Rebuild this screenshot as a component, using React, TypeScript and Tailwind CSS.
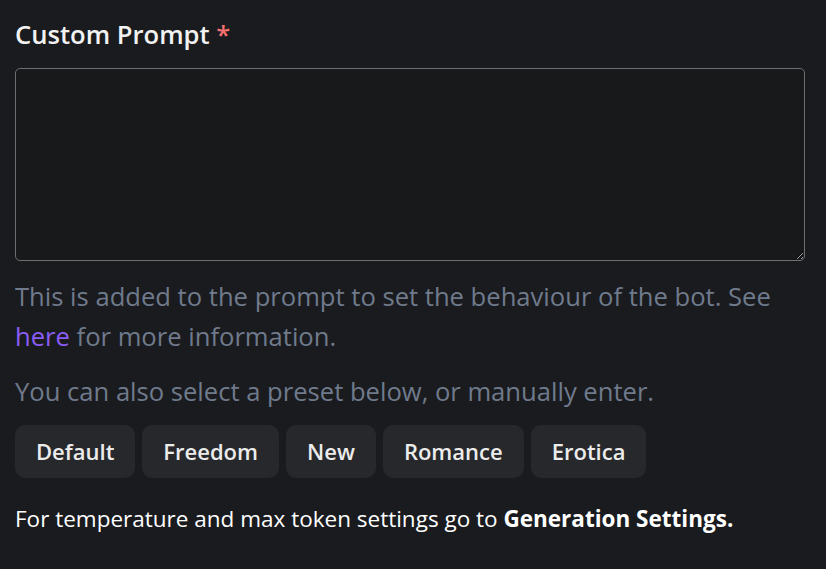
import React from 'react';

const presets = ['Default', 'Freedom', 'New', 'Romance', 'Erotica'];

export default function App() {
  return (
    <div
      className="min-h-[569px] w-full bg-[#1a1b1e] px-[15px] pt-[17px] text-white"
      style={{ fontFamily: '"Open Sans", "Noto Sans", sans-serif' }}
    >
      <label className="block text-[25.6px] font-semibold leading-[36px] text-[#f2f2f2]">
        Custom Prompt <span className="text-[#f87171]">*</span>
      </label>
      <textarea className="mt-[15px] block h-[193px] w-[790px] rounded-[5px] border border-[#6e6e70] bg-[#18191b] p-3 text-white outline-none" />
      <p className="mt-[16px] text-[25.6px] leading-[40px] text-[#6f7a8c]">
        This is added to the prompt to set the behaviour of the bot. See{' '}
        <a className="text-[#8b5cf6]" href="#">here</a> for more information.
      </p>
      <p className="mt-[15px] text-[25.6px] leading-[40px] text-[#6f7a8c]">
        You can also select a preset below, or manually enter.
      </p>
      <div className="mt-[13px] flex gap-[7px]">
        {presets.map((p) => (
          <button
            key={p}
            className="h-[53px] rounded-[10px] bg-[#27282b] px-[21px] text-[22px] font-semibold text-[#ececec]"
          >
            {p}
          </button>
        ))}
      </div>
      <p className="mt-[26px] text-[22.5px] leading-[30px] text-white">
        For temperature and max token settings go to <b>Generation Settings.</b>
      </p>
    </div>
  );
}
